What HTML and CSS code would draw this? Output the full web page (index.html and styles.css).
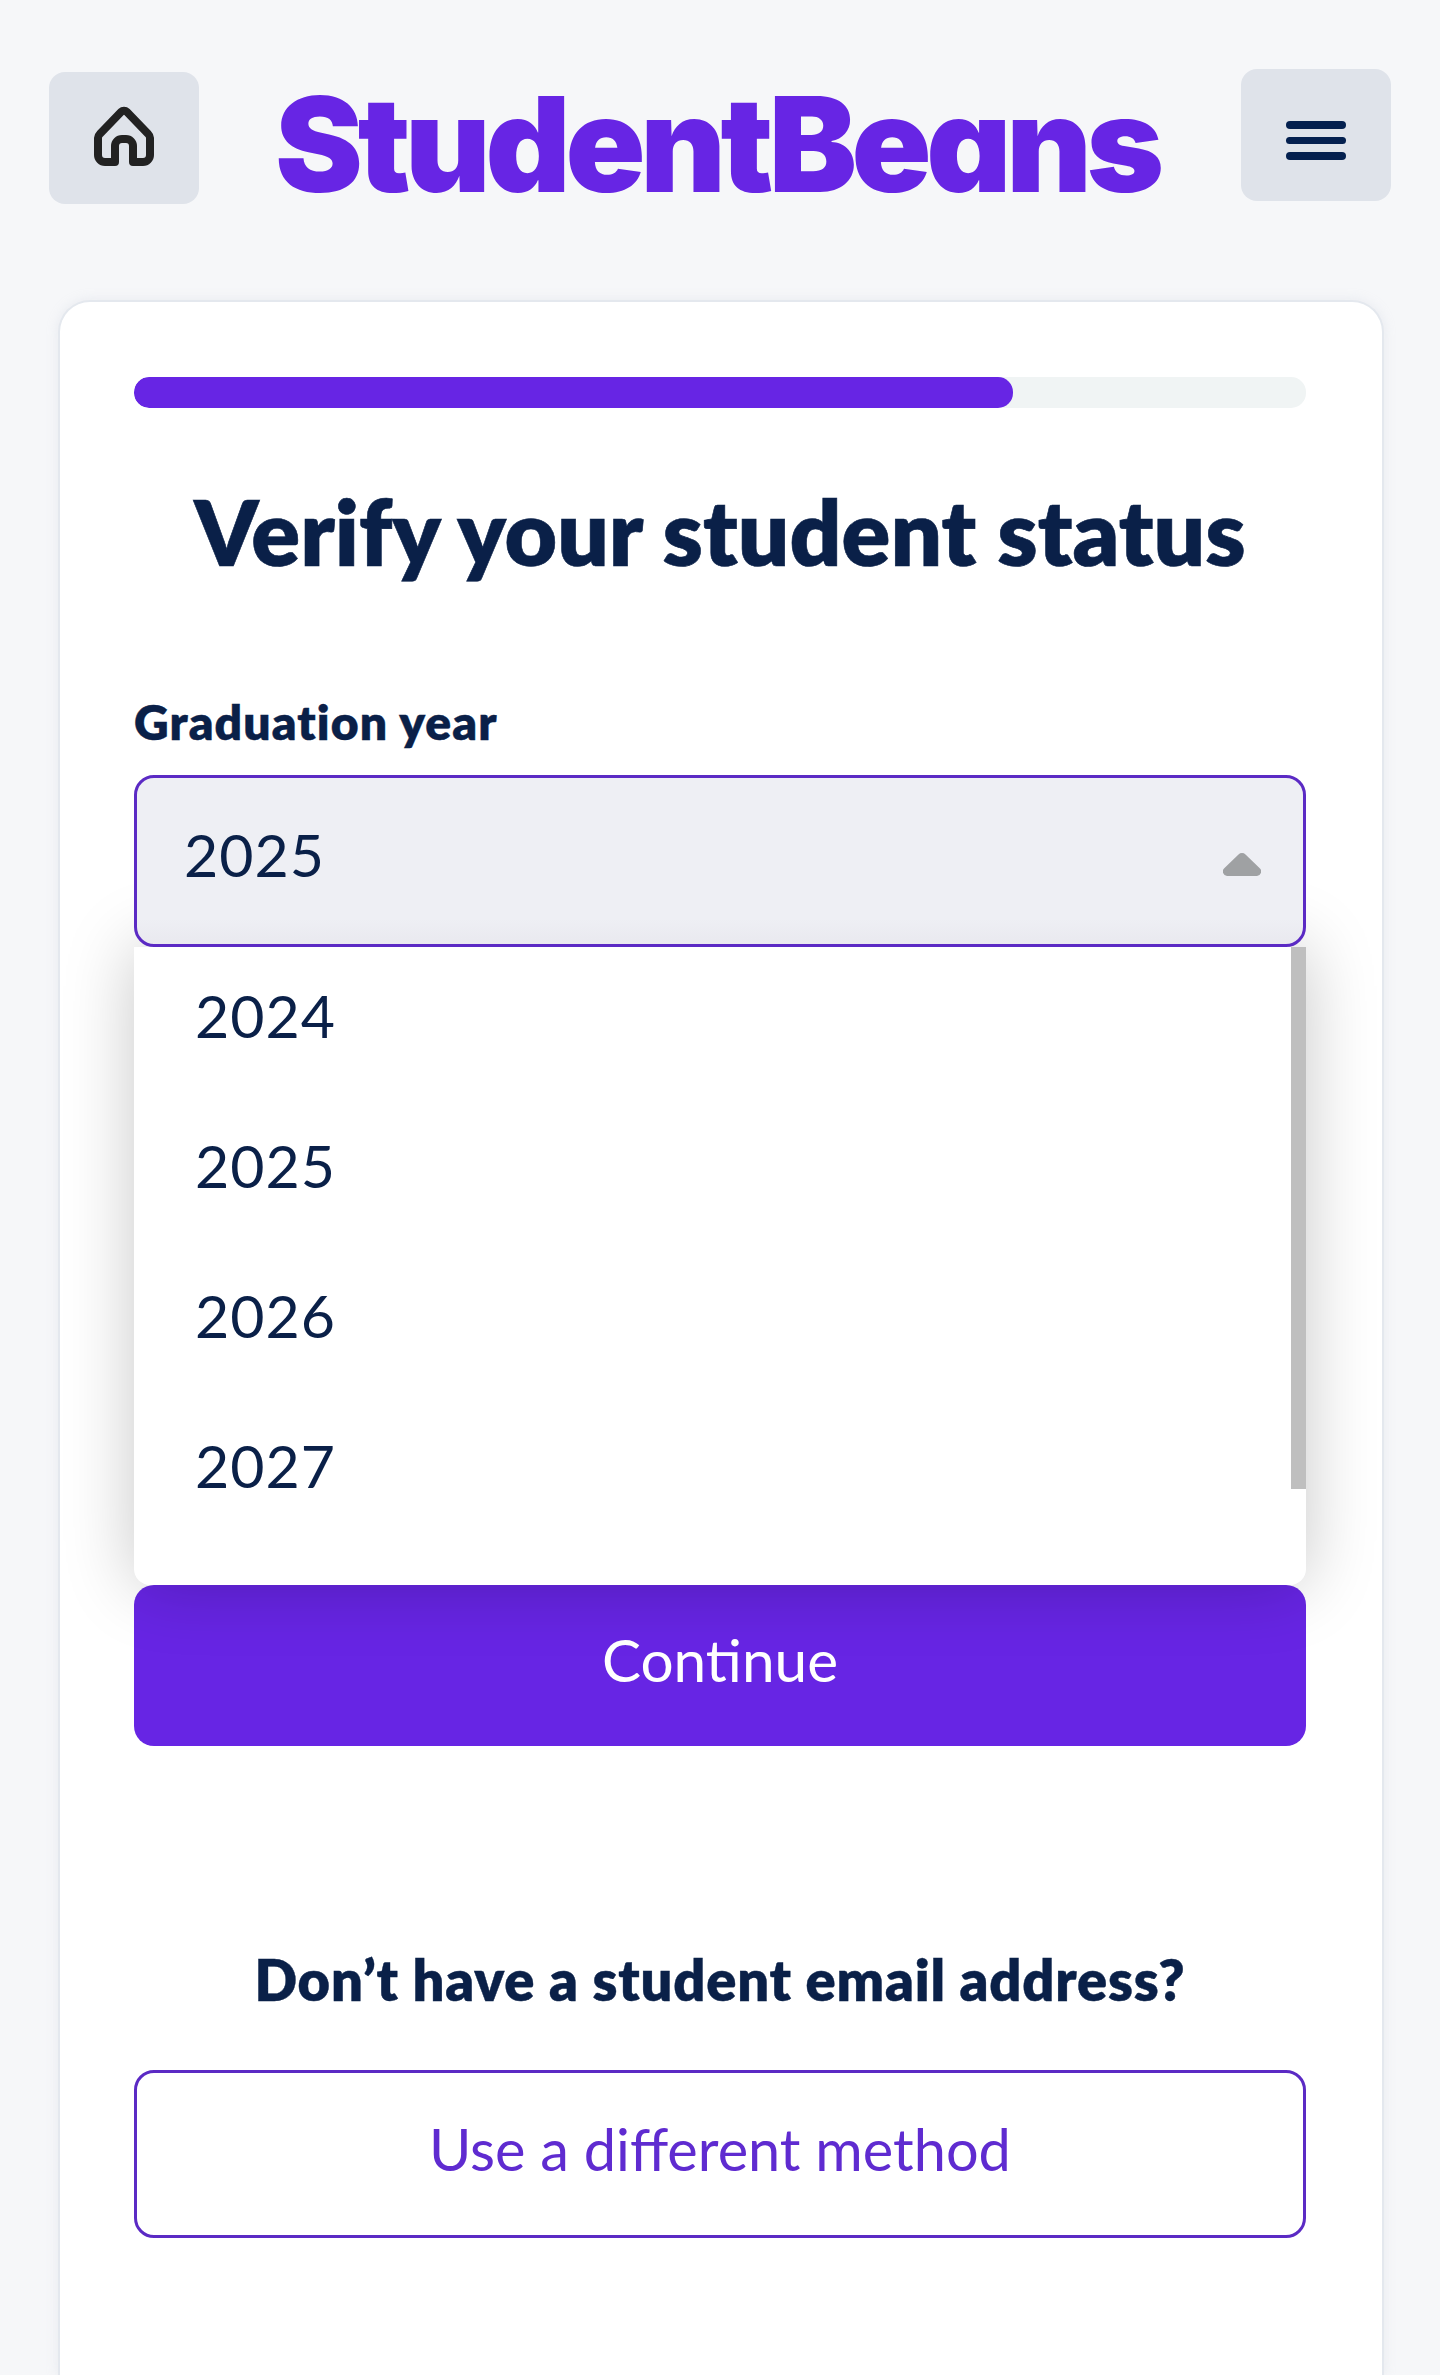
FILE: index.html
```html
<!DOCTYPE html>
<html lang="en">
<head>
<meta charset="utf-8">
<title>Verify your student status</title>
<link rel="stylesheet" href="styles.css">
</head>
<body>
<header class="top">
  <a class="nav-btn home" aria-label="Home">
    <svg class="home-icon" width="60" height="61" viewBox="0 0 60 61" fill="none"><path d="M21 57V41a7 7 0 0 1 7-7h4a7 7 0 0 1 7 7V57H49a7 7 0 0 0 7-7V33a6 6 0 0 0-1.8-4L33 7a4.5 4.5 0 0 0-6 0L5.8 29a6 6 0 0 0-1.800 4V50a7 7 0 0 0 7 7H21Z" stroke="#222" stroke-width="8" stroke-linejoin="round"/></svg>
  </a>
  <div class="logo">StudentBeans</div>
  <button class="nav-btn menu" aria-label="Menu">
    <span class="bar"></span><span class="bar"></span><span class="bar"></span>
  </button>
</header>
<main class="card">
  <div class="progress"><div class="progress-fill"></div></div>
  <h1 class="title">Verify your student status</h1>
  <div class="field">
    <div class="label">Graduation year</div>
    <div class="select">
      <span class="select-value">2025</span>
      <svg class="caret" width="38" height="23" viewBox="0 0 38 23"><path d="M15.500 1.500a5 5 0 0 1 7 0L36.500 15a4.500 4.500 0 0 1-3 8H4.500a4.500 4.500 0 0 1-3-8Z" fill="#9fa1a3"/></svg>
    </div>
    <ul class="options">
      <li class="option">2024</li>
      <li class="option">2025</li>
      <li class="option">2026</li>
      <li class="option">2027</li>
      <li class="scroll-thumb" aria-hidden="true"></li>
    </ul>
  </div>
  <button class="btn-primary">Continue</button>
  <p class="alt-q">Don’t have a student email address?</p>
  <button class="btn-outline">Use a different method</button>
</main>
</body>
</html>
```
FILE: styles.css
```css
* { box-sizing: border-box; }
html, body { margin: 0; padding: 0; }
body {
  background: #f6f7f9;
  font-family: "Lato", "Liberation Sans", sans-serif;
  color: #0a2048;
  height: 2375px;
  overflow: hidden;
}
.top {
  display: flex;
  align-items: flex-start;
  justify-content: space-between;
  padding: 69px 49px 0;
  height: 300px;
}
.nav-btn {
  display: flex;
  width: 150px;
  height: 132px;
  background: #dfe3ea;
  border: 0;
  border-radius: 16px;
  padding: 0;
}
.home { margin-top: 3px; align-items: flex-start; justify-content: center; padding-top: 33px; }
.menu { flex-direction: column; align-items: center; gap: 8px; padding-top: 52px; }
.bar { display: block; width: 60px; height: 7.500px; background: #04204f; border-radius: 4px; }
.logo {
  margin: 10px 6px 0 0;
  font-family: "Inter", sans-serif;
  font-weight: 900;
  font-feature-settings: "cv11" 1;
  font-size: 132px;
  line-height: 130px;
  letter-spacing: -5.300px;
  color: #6725e4;
}
.card {
  width: 1326px;
  margin: 0 0 0 58px;
  height: 2075px;
  background: #fff;
  border: 2px solid #e4e8ee;
  border-bottom: 0;
  border-radius: 32px 32px 0 0;
  padding: 75px 76px 0 74px;
  box-shadow: 0 0 12px rgba(190, 200, 215, .25);
}
.progress { height: 31px; background: #f0f4f4; border-radius: 15px; overflow: hidden; }
.progress-fill { width: 879px; height: 100%; background: #6725e4; border-radius: 15px; }
.title {
  margin: 68px 0 0;
  font-size: 90.700px;
  line-height: 110px;
  font-weight: 800;
  -webkit-text-stroke: .6px #0a2048;
  text-align: center;
  white-space: nowrap;
}
.field { position: relative; margin-top: 106px; }
.label { font-size: 48px; line-height: 60px; font-weight: 800; -webkit-text-stroke: .4px #0a2048; letter-spacing: 1.100px; }
.select {
  position: relative;
  z-index: 3;
  display: flex;
  align-items: center;
  justify-content: space-between;
  margin-top: 23px;
  height: 172px;
  padding: 0 42px 0 47px;
  background: linear-gradient(#eeeff4 85%, #e9e9ef);
  border: 3px solid #5b2ac4;
  border-radius: 20px;
}
.select-value { font-size: 59px; line-height: 70px; letter-spacing: 1px; margin-bottom: 12px; }
.caret { margin-top: 6px; }
.options {
  position: absolute;
  left: 0;
  right: 0;
  top: 255px;
  height: 638px;
  margin: 0;
  padding: 0;
  list-style: none;
  background: #fff;
  border-radius: 0 0 16px 16px;
  box-shadow: 0 0 70px rgba(0, 0, 0, .22);
  z-index: 2;
}
.option { height: 150px; padding-left: 61px; font-size: 59px; line-height: 138px; letter-spacing: 1px; }
.scroll-thumb { position: absolute; top: 0; right: 0; width: 15px; height: 542px; background: #bfbfbf; }
.btn-primary {
  display: block;
  width: 100%;
  margin-top: 638px;
  height: 161px;
  border: 0;
  border-radius: 20px;
  background: #6725e4;
  color: #fff;
  font-family: inherit;
  font-size: 58.500px;
  padding-bottom: 14px;
}
.alt-q {
  margin: 199px 0 0;
  text-align: center;
  font-size: 56px;
  line-height: 70px;
  font-weight: 800;
  -webkit-text-stroke: .4px #0a2048;
  letter-spacing: .8px;
}
.btn-outline {
  display: block;
  width: 100%;
  margin-top: 55px;
  height: 168px;
  background: #fff;
  border: 3px solid #5b2ac4;
  border-radius: 20px;
  color: #5f2bd0;
  font-family: inherit;
  font-size: 57.700px;
  padding-bottom: 12px;
}
```
